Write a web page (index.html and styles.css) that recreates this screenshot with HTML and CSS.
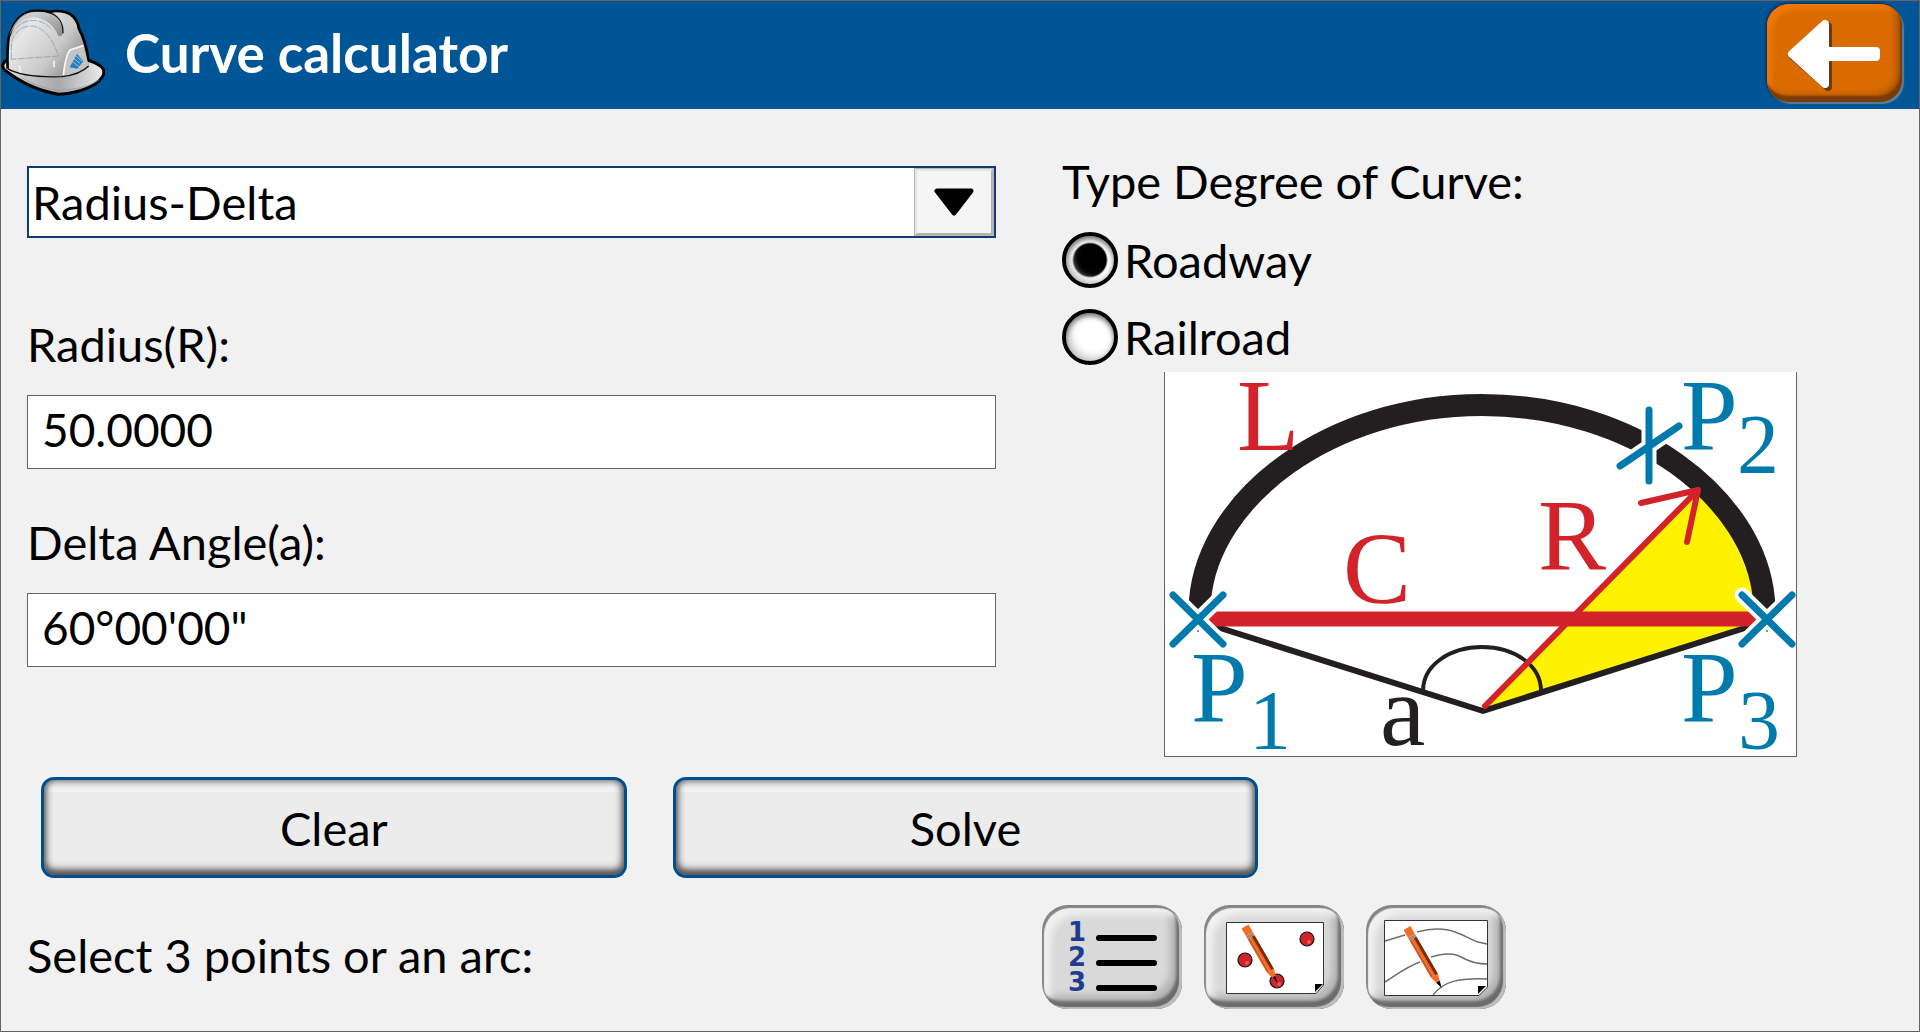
FILE: index.html
```html
<!DOCTYPE html>
<html lang="en">
<head>
<meta charset="utf-8">
<meta name="viewport" content="width=device-width, initial-scale=1">
<title>Curve calculator</title>
<link rel="stylesheet" href="styles.css">
</head>
<body>
<div class="window">
  <header class="titlebar">
    <svg class="helmet" viewBox="3 3 312 288" aria-hidden="true">
      <defs>
        <linearGradient id="shell" x1="0" y1="0" x2="1" y2="0.6">
          <stop offset="0" stop-color="#b5b5b5"/><stop offset="0.3" stop-color="#e6e6e6"/><stop offset="0.7" stop-color="#c9c9c9"/><stop offset="1" stop-color="#8f8f8f"/>
        </linearGradient>
        <linearGradient id="brim" x1="0" y1="0" x2="1" y2="0">
          <stop offset="0" stop-color="#dedede"/><stop offset="0.55" stop-color="#a9a9a9"/><stop offset="1" stop-color="#ececec"/>
        </linearGradient>
        <linearGradient id="ridge" x1="0" y1="0" x2="1" y2="1">
          <stop offset="0" stop-color="#e9e9e9"/><stop offset="1" stop-color="#6f6f6f"/>
        </linearGradient>
      </defs>
      <path d="M24 180C8 184 4 200 14 210C60 246 110 272 176 283C220 280 268 268 298 242C316 224 316 206 298 196C286 188 276 184 264 180Z" fill="url(#brim)" stroke="#000" stroke-width="9" stroke-linejoin="round"/>
      <path d="M23 206C22 180 22 140 26 112C38 72 60 40 96 33C118 31 132 32 148 36C170 30 196 34 210 42C226 52 236 72 236 84C250 110 262 150 266 196C250 216 214 228 186 230C120 232 60 226 23 206Z" fill="url(#shell)"/>
      <path d="M23 206C22 180 22 140 26 112C38 72 60 40 96 33C118 31 132 32 148 36C170 30 196 34 210 42C226 52 236 72 236 84C250 110 262 150 266 186" fill="none" stroke="#000" stroke-width="8"/>
      <path d="M26 112C38 72 60 40 96 36C140 32 186 46 189 100Q184 114 174 106C164 76 134 54 98 52C62 54 38 84 26 112Z" fill="url(#ridge)" opacity=".75"/>
      <path d="M142 36C174 44 190 68 189 100" fill="none" stroke="#111" stroke-width="4"/>
      <path d="M34 178V130C40 100 62 78 96 78C136 82 160 124 176 168L34 178M32 110C48 74 76 58 108 62C128 64 142 74 152 86" fill="none" stroke="#7e97aa" stroke-width="2" stroke-dasharray="22 4"/>
      <path d="M190 228C194 190 200 162 210 150L250 135L266 196C248 216 220 226 190 228Z" fill="#c4c4c4"/>
      <path d="M190 226C194 190 200 162 210 150L250 137" fill="none" stroke="#f7f7f7" stroke-width="5"/>
      <path d="M23 206C60 228 126 232 186 230C222 226 250 214 266 198" fill="none" stroke="#111" stroke-width="4"/>
      <path d="M58 196L62 218M162 182V202" stroke="#f4f4f4" stroke-width="5"/>
      <path d="M64 232C100 252 136 268 174 270C220 270 264 262 298 240" fill="none" stroke="#8298a8" stroke-width="2"/>
      <path d="M231 161L250 184L232 206L209 202Z" fill="#2380c3"/>
      <path d="M222 176L240 190M217 185L236 199M226 166L246 184" stroke="#dfe7ee" stroke-width="2"/>
    </svg>
    <h1 class="title">Curve calculator</h1>
    <button class="back" type="button" aria-label="Back">
      <svg class="back-arrow" viewBox="0 0 135 98" aria-hidden="true">
        <path class="arrow-shadow" d="M26 52L61 22V50H109V53H61V83Z"/>
        <path class="arrow" d="M25 50L58 20V47H109V53H58V80Z"/>
      </svg>
    </button>
  </header>

  <main class="content">
    <section class="upper">
      <div class="inputs">
        <div class="combo">
          <select class="combo-list" aria-label="Known values">
            <option>Radius-Delta</option>
          </select>
          <span class="combo-arrow" aria-hidden="true">
            <svg viewBox="0 0 40 28" width="40" height="28"><path d="M3 3H37L20 25Z" stroke="#000" stroke-width="5" stroke-linejoin="round"/></svg>
          </span>
        </div>
        <div class="field">
          <label for="radius">Radius(R):</label>
          <input id="radius" class="value" type="text" value="50.0000">
        </div>
        <div class="field">
          <label for="delta">Delta Angle(a):</label>
          <input id="delta" class="value" type="text" value="60°00'00&quot;">
        </div>
      </div>

      <div class="options">
        <fieldset class="degree">
          <legend>Type Degree of Curve:</legend>
          <label class="choice"><input type="radio" name="degree" checked>Roadway</label>
          <label class="choice"><input type="radio" name="degree">Railroad</label>
        </fieldset>
        <svg class="diagram" viewBox="0 0 631 384" role="img" aria-label="Curve geometry">
          <path d="M318 338L532 118C566 155 588 200 592 245L602 249Z" fill="#fff200"/>
          <path d="M33 249L318 339L602 249" fill="none" stroke="#231f20" stroke-width="6" stroke-linejoin="round"/>
          <path d="M258 319C258 293 285 275 317 275S376 293 376 319" fill="none" stroke="#231f20" stroke-width="4"/>
          <path d="M34 246L35 228C44 125 165 33 317 33S590 125 599 228L600 246" fill="none" stroke="#231f20" stroke-width="22"/>
          <path d="M33 247H602" stroke="#d2232a" stroke-width="15"/>
          <path d="M320 334L532 119M476 131L533 118L522 170" fill="none" stroke="#d2232a" stroke-width="6" stroke-linecap="round" stroke-linejoin="round"/>
          <g fill="none" stroke-linecap="round">
            <path d="M8 223L58 272M58 223L8 272M577 223L627 272M627 223L577 272M484 38V109M455 94L514 54" stroke="#fff" stroke-width="15"/>
            <path d="M8 223L58 272M58 223L8 272M577 223L627 272M627 223L577 272M484 38V109M455 94L514 54" stroke="#007aad" stroke-width="7"/>
          </g>
          <path d="M32 259H34M601 259H603" stroke="#231f20" stroke-width="1"/>
          <g class="letters">
            <text class="red" x="72" y="78">L</text>
            <text class="red" x="178" y="231">C</text>
            <text class="red" x="373" y="198">R</text>
            <text x="215" y="373">a</text>
            <text class="blue" x="26" y="350">P</text><text class="blue sub" x="84" y="377">1</text>
            <text class="blue" x="516" y="78">P</text><text class="blue sub" x="572" y="101">2</text>
            <text class="blue" x="516" y="350">P</text><text class="blue sub" x="573" y="377">3</text>
          </g>
        </svg>
      </div>
    </section>

    <section class="actions">
      <button class="action" type="button">Clear</button>
      <button class="action" type="button">Solve</button>
    </section>

    <section class="picker">
      <p class="picker-label">Select 3 points or an arc:</p>
      <div class="tools">
        <button class="tool" type="button" aria-label="Pick from list">
          <svg viewBox="0 0 140 104" aria-hidden="true">
            <g class="numerals"><text x="26" y="36">1</text><text x="26" y="61">2</text><text x="26" y="86">3</text></g>
            <path d="M57 33H112M57 58H112M57 83H112" stroke="#000" stroke-width="6" stroke-linecap="round"/>
          </svg>
        </button>
        <button class="tool" type="button" aria-label="Pick points on map">
          <svg viewBox="0 0 140 104" aria-hidden="true">
            <path d="M22.500 17.500H119.500V80L112 88.500H22.500Z" fill="#fff" stroke="#333"/>
            <path d="M111 79H119L111 87Z"/>
            <g fill="#d2232a" stroke="#111" stroke-width="1.200"><circle cx="41" cy="55" r="7"/><circle cx="103" cy="34" r="7"/><circle cx="73" cy="76" r="7"/></g>
            <g fill="#ea5a4a"><circle cx="43" cy="58" r="2"/><circle cx="105" cy="37" r="2"/><circle cx="75" cy="79" r="2"/></g>
            <g transform="translate(73 77) rotate(-30)">
              <path d="M-4 -52H-1.500V-13H-4Z" fill="#d9541a"/><path d="M-1.500 -52H2V-13H-1.500Z" fill="#e96a24"/><path d="M1 -52H4V-13H1Z" fill="#7c2b08"/>
              <path d="M-4 -64H4V-55H-4Z" fill="#f36c21"/><path d="M-4 -55H4V-52H-4Z" fill="#a88674"/>
              <path d="M-4 -13H4L0 0Z" fill="#f36c21"/><path d="M-1.500 -6H1.500L0 2Z"/>
            </g>
          </svg>
        </button>
        <button class="tool" type="button" aria-label="Pick arc on map">
          <svg viewBox="0 0 140 104" aria-hidden="true">
            <path d="M18.500 15.500H121.500V82L113 90.500H18.500Z" fill="#fff" stroke="#333"/>
            <path d="M19 36L39 30M51 27C82 18 96 31 112 37L121 39M19 77C30 70 42 61 54 57M65 52C84 46 92 50 99 54Q109 59 121 59M67 90C78 76 92 73 121 74" fill="none" stroke="#6d6e71" stroke-width="1.500"/>
            <path d="M112 81H120L112 89Z"/>
            <g transform="translate(75 82) rotate(-30)">
              <path d="M-4 -56H-1.500V-13H-4Z" fill="#d9541a"/><path d="M-1.500 -56H2V-13H-1.500Z" fill="#e96a24"/><path d="M1 -56H4V-13H1Z" fill="#7c2b08"/>
              <path d="M-4 -68H4V-59H-4Z" fill="#f36c21"/><path d="M-4 -59H4V-56H-4Z" fill="#a88674"/>
              <path d="M-4 -13H4L0 0Z" fill="#f36c21"/><path d="M-2 -6H2L0 1Z"/>
            </g>
          </svg>
        </button>
      </div>
    </section>
  </main>
</div>
</body>
</html>
```
FILE: styles.css
```css
* {
  box-sizing: border-box;
}

body {
  margin: 0;
  background: #f1f1f1;
  color: #000;
  font-family: Lato, Carlito, sans-serif;
  font-size: 47px;
  line-height: 56px;
}

button,
input,
select {
  margin: 0;
  font: inherit;
  color: inherit;
}

.window {
  display: flex;
  flex-direction: column;
  min-height: 100vh;
  border: 1px solid #646464;
}

/* Title bar */
.titlebar {
  display: flex;
  align-items: center;
  height: 108px;
  padding: 0 17px 4px 0;
  background: #005596;
}

.helmet {
  flex: none;
  width: 104px;
  height: 96px;
  align-self: flex-start;
}

.title {
  flex: 1;
  margin: 0 0 0 20px;
  color: #fff;
  font-size: 53px;
  font-weight: 700;
  line-height: 60px;
}

.back {
  flex: none;
  width: 135px;
  height: 98px;
  padding: 0;
  border: 0;
  border-radius: 22px;
  background: #d96b00;
  box-shadow:
    inset -2px -6px 2px #7a3a00,
    inset -6px -7px 6px #a85200,
    inset 5px 6px 5px #f07800,
    -1px -1px 3px #002d52,
    2px 2px 1px #5b86a8;
}

.back-arrow {
  display: block;
  width: 100%;
}

.arrow,
.arrow-shadow {
  fill: #fff;
  stroke: #fff;
  stroke-width: 8;
  stroke-linejoin: round;
}

.arrow-shadow {
  fill: #6b3a10;
  stroke: #6b3a10;
}

/* Page body */
.content {
  padding: 44px 26px 20px;
}

.upper {
  display: grid;
  grid-template-columns: 969fr 831fr;
  gap: 66px;
}

.inputs {
  display: flex;
  flex-direction: column;
  padding-top: 13px;
}

.combo {
  display: grid;
  grid-template-columns: 1fr 82px;
  height: 72px;
  margin-bottom: 78px;
}

.combo-list {
  grid-area: 1 / 1 / 2 / 3;
  appearance: none;
  padding: 0 84px 0 3px;
  border: 2px solid #123a6b;
  border-radius: 0;
  background: #fff;
}

.combo-arrow {
  grid-area: 1 / 2;
  display: grid;
  place-items: center;
  margin: 2px 2px 2px 0;
  border: 3px solid;
  border-color: #e2e4e6 #b2b2b2 #b2b2b2 #e2e4e6;
  outline: 1px solid #b8b8b8;
  outline-offset: -1px;
  background: #f5f5f5;
  pointer-events: none;
}

.field {
  display: flex;
  flex-direction: column;
  gap: 23px;
  margin-bottom: 45px;
}

.value {
  width: 100%;
  height: 74px;
  padding: 0 14px 6px;
  border: 1px solid #646464;
  border-radius: 0;
  background: #fff;
  font-size: 46px;
}

.degree {
  display: flex;
  flex-direction: column;
  gap: 21px;
  min-width: 0;
  margin: 0 0 7px;
  padding: 0;
  border: 0;
}

.degree legend {
  margin-bottom: 23px;
  padding: 0;
}

.choice {
  display: flex;
  align-items: center;
  gap: 6px;
}

.choice input {
  appearance: none;
  width: 56px;
  height: 56px;
  border: 4px solid #000;
  border-radius: 50%;
  background: #fff;
  box-shadow: inset 0 3px 5px #777, inset 4px -3px 8px #c8c8c8;
}

.choice input:checked {
  background: radial-gradient(circle, #000 16px, #fff 18px);
}

.diagram {
  display: block;
  width: calc(100% - 102px);
  max-width: 633px;
  margin-left: 102px;
  border: 1px solid #646464;
  border-top: 0;
  background: #fff;
}

.letters {
  fill: #231f20;
  font-family: "Liberation Serif", serif;
  font-size: 102px;
}

.letters .sub {
  font-size: 84px;
}

.letters .red {
  fill: #d2232a;
}

.letters .blue {
  fill: #007aad;
}

/* Clear and Solve */
.actions {
  display: grid;
  grid-template-columns: 586fr 586fr 589fr;
  gap: 46px;
  margin-top: 20px;
  padding-left: 14px;
}

.action {
  height: 101px;
  padding: 0;
  border: 3px solid #004f8c;
  border-radius: 13px;
  background: linear-gradient(#f3f3f3 12px, #ececec 12px);
  box-shadow:
    inset 0 -4px 5px #555,
    inset 0 -6px 9px #999,
    inset 0 0 9px #444;
}

/* Point and arc picker */
.picker {
  display: grid;
  grid-template-columns: 969fr 851fr;
  gap: 46px;
  align-items: center;
  margin-top: 27px;
}

.picker-label {
  margin: 0;
  padding-bottom: 4px;
}

.tools {
  display: flex;
  gap: 22px;
}

.tool {
  width: 140px;
  height: 104px;
  padding: 0;
  border: 0;
  border-radius: 26px;
  background: #d9d9d9;
  box-shadow:
    inset 2px 3px 1px #858585,
    inset -3px -2px 1px #bdbdbd,
    inset -6px -8px 3px #6b6b6b,
    inset 9px 10px 6px #f0f0f0,
    inset -12px -14px 7px #b4b4b4;
}

.tool svg {
  display: block;
  width: 100%;
}

.numerals {
  fill: #1f3d8f;
  font-family: "DejaVu Sans", sans-serif;
  font-size: 26px;
  font-weight: 700;
}
```
